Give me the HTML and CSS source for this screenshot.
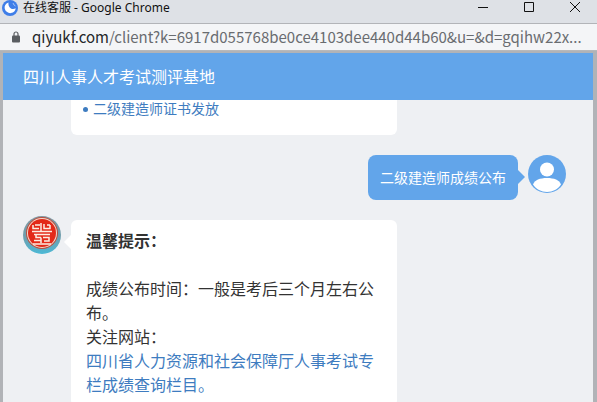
FILE: index.html
```html
<!DOCTYPE html>
<html lang="zh-CN">
<head>
<meta charset="utf-8">
<title>在线客服</title>
<link rel="stylesheet" href="styles.css">
</head>
<body>
<header class="titlebar">
  <svg class="app-icon" viewBox="0 0 16 16" aria-hidden="true">
    <circle cx="8" cy="8" r="8" fill="#3f7ee8"/>
    <path d="M6.500 2.500C3.500 3.500 2.200 6 2.700 8.600C3.300 11.600 6.200 13.400 9 13.100C11.700 12.800 13.500 10.800 13.700 8.300C11.700 9.400 9.300 9.200 8 7.800C6.600 6.300 6.200 4.300 6.500 2.500Z" fill="#fff"/>
    <path d="M11 3L12 5L13.500 6" fill="none" stroke="#9dc0fa"/>
  </svg>
  <span class="window-title">在线客服 - Google Chrome</span>
  <div class="window-controls">
    <button class="window-button" type="button" aria-label="最小化"><svg viewBox="0 0 10 10"><path d="M0 5.500H10"/></svg></button>
    <button class="window-button" type="button" aria-label="最大化"><svg viewBox="0 0 10 10"><path d="M.5 .5H9.500V9.500H.5Z"/></svg></button>
    <button class="window-button" type="button" aria-label="关闭"><svg viewBox="0 0 10 10"><path d="M0 0L10 10M10 0L0 10"/></svg></button>
  </div>
</header>
<div class="addressbar">
  <svg class="lock" viewBox="0 0 8 12" aria-hidden="true">
    <path d="M2 5V3a2 2 0 0 1 4 0V5" fill="none" stroke="#5a5d61" stroke-width="1.200"/>
    <rect y="4.500" width="8" height="7" rx="1" fill="#5a5d61"/>
  </svg>
  <span class="url"><span class="host">qiyukf.com</span>/client?k=6917d055768be0ce4103dee440d44b60&amp;u=&amp;d=gqihw22x...</span>
</div>
<main class="page">
  <h1 class="chat-title">四川人事人才考试测评基地</h1>
  <section class="messages">
    <div class="message message-continued">
      <ul class="bubble topics"><li><a href="#certificate">二级建造师证书发放</a></li></ul>
    </div>
    <div class="message message-user">
      <p class="bubble bubble-user">二级建造师成绩公布</p>
      <svg class="avatar" viewBox="0 0 38 38" role="img" aria-label="访客">
        <circle cx="19" cy="19" r="19" fill="#62a5ea"/>
        <circle cx="19" cy="14.500" r="7" fill="#fff"/>
        <path d="M5 29.500C6.500 25 12 23 19 23S31.500 25 33 29.500C29.800 34.200 24.800 37 19 37S8.200 34.200 5 29.500Z" fill="#fff"/>
      </svg>
    </div>
    <div class="message">
      <svg class="avatar" viewBox="0 0 38 38" role="img" aria-label="客服">
        <defs><linearGradient id="ring" x2="0" y2="1"><stop stop-color="#82969f"/><stop offset=".55" stop-color="#6f9fae"/><stop offset="1" stop-color="#4bb9d6"/></linearGradient></defs>
        <circle cx="19" cy="19" r="19" fill="url(#ring)"/>
        <circle cx="19" cy="17" r="16" fill="#b9503f"/>
        <circle cx="19" cy="17" r="15" fill="#f4d9cd"/>
        <circle cx="19" cy="17" r="14" fill="#e32a18"/>
        <path d="M10 9V12.500H16M12 9H17M18 7V15M21 8V12.500H27V9M24 9H27M9 15.500H29M11 18.500H27M13 18.500V21.500H18M20 21.500H26V25H21M11 24.500H18M18 21.500V27M10 28H28" fill="none" stroke="#fdeee2" stroke-width="1.500"/>
      </svg>
      <div class="bubble bubble-answer">
        <p><strong>温馨提示：</strong></p>
        <p class="answer-body">成绩公布时间：一般是考后三个月左右公布。</p>
        <p>关注网站：</p>
        <p><a href="#scores">四川省人力资源和社会保障厅人事考试专栏成绩查询栏目。</a></p>
      </div>
    </div>
  </section>
</main>
</body>
</html>
```
FILE: styles.css
```css
* {
  box-sizing: border-box;
}

body {
  margin: 0;
  height: 100vh;
  display: flex;
  flex-direction: column;
  overflow: hidden;
  background: #b1b3b7;
  color: #333;
  font-family: "Noto Sans", "Noto Sans CJK SC", sans-serif;
}

h1, p, ul {
  margin: 0;
}

a {
  color: #3e7cc0;
  text-decoration: none;
}

.titlebar {
  flex: none;
  display: flex;
  align-items: flex-start;
  height: 24px;
  padding: 0 8px 0 2px;
  border-bottom: 1px solid #b2b4b8;
  background: #dee1e6;
}

.app-icon {
  width: 16px;
  height: 16px;
  margin-right: 5px;
}

.window-title {
  flex: 1;
  color: #111;
  font-size: 12px;
  line-height: 16px;
  white-space: nowrap;
}

.window-controls {
  display: flex;
  gap: 18px;
}

.window-button {
  display: flex;
  align-items: center;
  justify-content: center;
  width: 28px;
  height: 14px;
  padding: 0;
  border: 0;
  background: none;
}

.window-button svg {
  width: 10px;
  height: 10px;
  fill: none;
  stroke: #111;
  overflow: visible;
}

.addressbar {
  flex: none;
  display: flex;
  align-items: center;
  height: 27px;
  padding: 0 12px;
  border-bottom: 1px solid #b7b9bc;
  background: #f4f5f7;
}

.lock {
  flex: none;
  width: 8px;
  height: 12px;
  margin-right: 12px;
}

.url {
  color: #696c70;
  font-family: "Noto Sans CJK SC", sans-serif;
  font-size: 15px;
  line-height: 20px;
  white-space: nowrap;
}

.host {
  color: #25272a;
}

.page {
  flex: 1;
  min-height: 0;
  margin: 2px 4px 0 3px;
  overflow: hidden;
  background: #eef0f3;
}

.chat-title {
  padding: 12px 20px 11px;
  background: #62a5ea;
  color: #fff;
  font-size: 16px;
  font-weight: 400;
  line-height: 24px;
}

.messages {
  display: flex;
  flex-direction: column;
  gap: 16px;
  padding: 0 27px 0 20px;
}

.message {
  display: flex;
  align-items: flex-start;
  gap: 10px;
}

.message-continued {
  padding: 0 0 4px 48px;
}

.message-user {
  justify-content: flex-end;
}

.avatar {
  flex: none;
  width: 38px;
  height: 38px;
}

.bubble {
  position: relative;
  border-radius: 6px;
  background: #fff;
}

.topics {
  width: 326px;
  padding: 0 12px 17px;
  border-radius: 0 0 6px 6px;
  font-size: 14px;
  line-height: 18px;
  list-style: none;
}

.topics li {
  display: flex;
  align-items: center;
  gap: 5px;
}

.topics li::before {
  content: "";
  width: 5px;
  height: 5px;
  border-radius: 50%;
  background: #3e7cc0;
}

.bubble-user {
  padding: 12px;
  border-radius: 8px;
  background: #62a5ea;
  color: #fff;
  font-size: 14px;
  line-height: 21px;
}

.bubble-user::after,
.bubble-answer::before {
  content: "";
  position: absolute;
  top: 15px;
  border: 7px solid transparent;
}

.bubble-user::after {
  left: 100%;
  border-right: 0;
  border-left-color: #62a5ea;
}

.bubble-answer::before {
  right: 100%;
  border-left: 0;
  border-right-color: #fff;
}

.bubble-answer {
  width: 326px;
  margin-top: 4px;
  padding: 9px 15px;
  font-size: 16px;
  line-height: 24px;
}

.answer-body {
  margin-top: 24px;
}
```
